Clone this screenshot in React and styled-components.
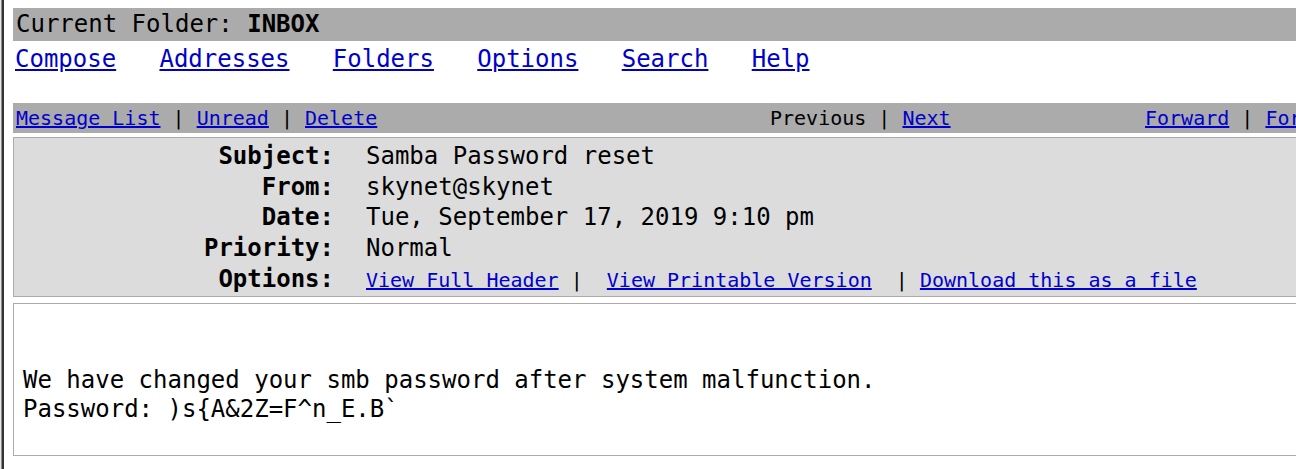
import React from 'react'
import styled, { createGlobalStyle } from 'styled-components'

const GlobalStyle = createGlobalStyle`
  html, body {
    margin: 0;
    padding: 0;
    background: #fff;
    overflow: hidden;
  }
`

const Page = styled.div`
  display: flex;
  min-height: 100vh;
  font-family: "DejaVu Sans Mono", "Liberation Mono", monospace;
  color: #000;
`

const FrameEdge = styled.div`
  width: 4px;
  flex-shrink: 0;
  background: linear-gradient(to right, #e8e8e8 0 1px, #8c8c8c 1px 2px, #333 2px 4px);
`

const Main = styled.main`
  flex-shrink: 0;
  width: 1700px;
  padding: 8px 0 0 9px;
`

const FolderBar = styled.div`
  background: #ababab;
  font-size: 24px;
  line-height: 28px;
  padding: 2px 3px 3px;
  b {
    font-weight: 700;
  }
`

const NavRow = styled.nav`
  display: flex;
  gap: 43.3px;
  font-size: 24px;
  line-height: 28px;
  padding: 4px 2px 0;
`

const Link = styled.a`
  color: #0000cc;
  text-decoration: underline;
  cursor: pointer;
`

const Toolbar = styled.div`
  display: grid;
  grid-template-columns: 754px 375px 1fr;
  margin-top: 30px;
  background: #ababab;
  font-size: 20px;
  line-height: 23px;
  padding: 4px 3px 3px;
  white-space: pre;
`

const HeaderBox = styled.div`
  display: grid;
  grid-template-columns: 320px 1fr;
  column-gap: 32px;
  align-items: baseline;
  margin-top: 4px;
  padding: 3px 0 0;
  border: 1px solid #ababab;
  background: #dcdcdc;
  font-size: 24px;
  line-height: 28.7px;
`

const Label = styled.div`
  font-weight: 700;
  text-align: right;
  padding: 1px 0;
`

const Value = styled.div`
  padding: 1px 0;
  white-space: pre;
  font-size: ${p => (p.$small ? '20px' : '24px')};
`

const MessageBody = styled.div`
  margin-top: 6px;
  border: 1px solid #ababab;
  padding: 62px 9px 31px;
  font-size: 24px;
  line-height: 29.4px;
  white-space: pre;
`

const headers = [
  ['Subject:', 'Samba Password reset'],
  ['From:', 'skynet@skynet'],
  ['Date:', 'Tue, September 17, 2019 9:10 pm'],
  ['Priority:', 'Normal'],
]

const navItems = ['Compose', 'Addresses', 'Folders', 'Options', 'Search', 'Help']

export default function App() {
  return (
    <>
      <GlobalStyle />
      <Page>
        <FrameEdge />
        <Main>
          <FolderBar>
            Current Folder: <b>INBOX</b>
          </FolderBar>
          <NavRow>
            {navItems.map(item => (
              <Link key={item}>{item}</Link>
            ))}
          </NavRow>

          <Toolbar>
            <div>
              <Link>Message List</Link> | <Link>Unread</Link> | <Link>Delete</Link>
            </div>
            <div>
              Previous | <Link>Next</Link>
            </div>
            <div>
              <Link>Forward</Link> | <Link>Forward as Attachment</Link> | <Link>Reply</Link> | <Link>Reply All</Link>
            </div>
          </Toolbar>

          <HeaderBox>
            {headers.map(([label, value]) => (
              <React.Fragment key={label}>
                <Label>{label}</Label>
                <Value>{value}</Value>
              </React.Fragment>
            ))}
            <Label>Options:</Label>
            <Value $small>
              <Link>View Full Header</Link>{' |  '}
              <Link>View Printable Version</Link>{'  | '}
              <Link>Download this as a file</Link>
            </Value>
          </HeaderBox>

          <MessageBody>
            {'We have changed your smb password after system malfunction.\nPassword: )s{A&2Z=F^n_E.B`'}
          </MessageBody>
        </Main>
      </Page>
    </>
  )
}
